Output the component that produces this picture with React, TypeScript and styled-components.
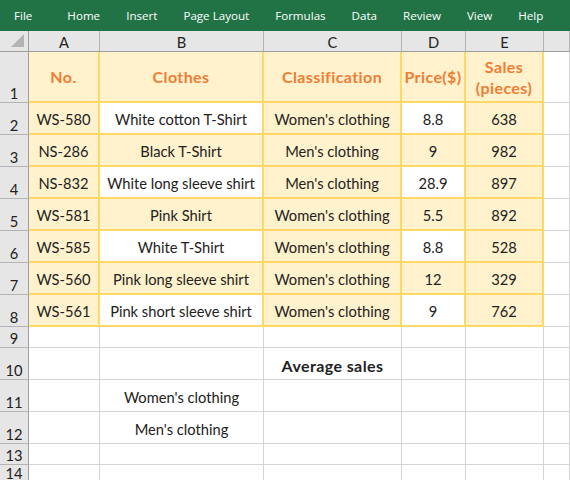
import React from "react";
import styled, { createGlobalStyle, css } from "styled-components";

const GlobalStyle = createGlobalStyle`
  html, body { margin: 0; padding: 0; background: #ffffff; overflow: hidden; }
  * { box-sizing: border-box; }
`;

const Page = styled.div`
  width: 570px;
  height: 480px;
  display: flex;
  flex-direction: column;
  overflow: hidden;
  background: #ffffff;
`;

const MenuBar = styled.nav`
  height: 31px;
  flex: 0 0 31px;
  background: #217346;
  display: flex;
  align-items: center;
  gap: 26px;
  padding-left: 14px;
  font-family: "Open Sans", "Noto Sans", sans-serif;
  font-size: 11.6px;
  color: #ffffff;
`;

const MenuItem = styled.span<{ $extra?: boolean }>`
  white-space: nowrap;
  line-height: 31px;
  ${(p) => p.$extra && css`margin-right: 9px;`}
`;

const Sheet = styled.div`
  flex: 1;
  display: grid;
  grid-template-columns: 29px 71px 164px 138px 64px 78px 1fr;
  grid-template-rows: 21px 51px repeat(7, 32px) 21px 32px 32px 32px 21px 1fr;
  font-family: Lato, "Open Sans", sans-serif;
  font-size: 14.7px;
  color: #222222;
`;

const HeaderBase = styled.div`
  background: #e6e6e6;
  display: flex;
  justify-content: center;
  color: #222222;
`;

const Corner = styled(HeaderBase)`
  position: relative;
  border-right: 1px solid #9e9e9e;
  border-bottom: 1px solid #9e9e9e;
`;

const CornerTriangle = styled.div`
  position: absolute;
  right: 4px;
  bottom: 4px;
  width: 0;
  height: 0;
  border-left: 13px solid transparent;
  border-bottom: 13px solid #b4b4b4;
`;

const ColHeader = styled(HeaderBase)`
  align-items: center;
  padding-top: 1px;
  border-right: 1px solid #b4b4b4;
  border-bottom: 1px solid #9e9e9e;
`;

const RowHeader = styled(HeaderBase)`
  align-items: flex-end;
  padding-bottom: 0;
  border-right: 1px solid #9e9e9e;
  border-bottom: 1px solid #b4b4b4;
  line-height: 17px;
`;

type Fill = "yellow" | "white" | "none";

const Cell = styled.div<{ $fill?: Fill; $boxed?: boolean; $bold?: boolean; $orange?: boolean }>`
  display: flex;
  align-items: center;
  justify-content: center;
  text-align: center;
  white-space: nowrap;
  overflow: visible;
  line-height: 21px;
  padding-top: 3px;
  background: ${(p) => (p.$fill === "yellow" ? "#fff2cc" : "#ffffff")};
  border-right: 1px solid #d4d4d4;
  border-bottom: 1px solid #d4d4d4;
  ${(p) =>
    p.$boxed &&
    css`
      border-right: 2px solid #ffd966;
      border-bottom: 2px solid #ffd966;
    `}
  ${(p) =>
    p.$bold &&
    css`
      font-weight: 700;
      font-size: 16px;
      letter-spacing: 0.4px;
    `}
  ${(p) =>
    p.$orange &&
    css`
      color: #f07d34;
      padding-top: 0;
    `}
`;

const menus = ["File", "Home", "Insert", "Page Layout", "Formulas", "Data", "Review", "View", "Help"];
const cols = ["A", "B", "C", "D", "E", ""];

const data: string[][] = [
  ["WS-580", "White cotton T-Shirt", "Women's clothing", "8.8", "638"],
  ["NS-286", "Black T-Shirt", "Men's clothing", "9", "982"],
  ["NS-832", "White long sleeve shirt", "Men's clothing", "28.9", "897"],
  ["WS-581", "Pink Shirt", "Women's clothing", "5.5", "892"],
  ["WS-585", "White T-Shirt", "Women's clothing", "8.8", "528"],
  ["WS-560", "Pink long sleeve shirt", "Women's clothing", "12", "329"],
  ["WS-561", "Pink short sleeve shirt", "Women's clothing", "9", "762"],
];

const headers: React.ReactNode[] = [
  "No.",
  "Clothes",
  "Classification",
  "Price($)",
  <>Sales<br />(pieces)</>,
];

const lower: (string | null)[][] = [
  [null, null, null, null, null, null],
  [null, null, "Average sales", null, null, null],
  [null, "Women's clothing", null, null, null, null],
  [null, "Men's clothing", null, null, null, null],
  [null, null, null, null, null, null],
  [null, null, null, null, null, null],
];

export default function App() {
  return (
    <Page>
      <GlobalStyle />
      <MenuBar>
        {menus.map((m, i) => (
          <MenuItem key={m} $extra={i === 0}>{m}</MenuItem>
        ))}
      </MenuBar>
      <Sheet>
        <Corner>
          <CornerTriangle />
        </Corner>
        {cols.map((c, i) => (
          <ColHeader key={"h" + i}>{c}</ColHeader>
        ))}

        <RowHeader>1</RowHeader>
        {headers.map((h, i) => (
          <Cell key={"t" + i} $fill="yellow" $boxed $bold $orange>
            <span>{h}</span>
          </Cell>
        ))}
        <Cell />

        {data.map((row, r) => (
          <React.Fragment key={"r" + r}>
            <RowHeader>{r + 2}</RowHeader>
            {row.map((v, c) => {
              const white = r % 2 === 0 && (c === 1 || c === 3);
              return (
                <Cell key={c} $fill={white ? "white" : "yellow"} $boxed>
                  {v}
                </Cell>
              );
            })}
            <Cell />
          </React.Fragment>
        ))}

        {lower.map((row, r) => (
          <React.Fragment key={"l" + r}>
            <RowHeader>{r + 9}</RowHeader>
            {row.map((v, c) => (
              <Cell key={c} $bold={v === "Average sales"}>
                {v}
              </Cell>
            ))}
          </React.Fragment>
        ))}
      </Sheet>
    </Page>
  );
}
